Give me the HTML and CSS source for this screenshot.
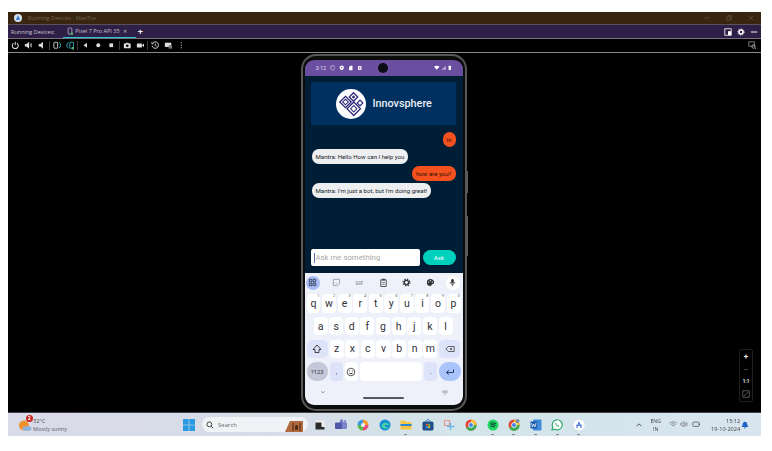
FILE: index.html
```html
<!DOCTYPE html>
<html lang="en">
<head>
<meta charset="utf-8">
<title>Running Devices - ManTra</title>
<link rel="stylesheet" href="styles.css">
</head>
<body>
<div class="app-window">
  <header class="titlebar">
    <svg class="app-logo" viewBox="0 0 10 10"><circle cx="5" cy="5" r="5" fill="#d8e4f4"/><path d="M5 1.6 8 7.6H2Z" fill="#3f7fd8"/></svg>
    <span class="title-text">Running Devices - ManTra</span>
    <div class="win-buttons">
      <svg viewBox="0 0 10 10"><path d="M2 5H8" stroke="#5b5040"/></svg>
      <svg viewBox="0 0 10 10"><path d="M2 3.5H6.500V8H2ZM3.500 3.500V2H8V6.500H6.500" fill="none" stroke="#5b5040"/></svg>
      <svg viewBox="0 0 10 10"><path d="M2 2 8 8M8 2 2 8" stroke="#5b5040"/></svg>
    </div>
  </header>
  <div class="tabbar">
    <span class="tab-label">Running Devices:</span>
    <div class="tab">
      <svg viewBox="0 0 8 10"><rect x="1.500" y="1" width="5" height="8" rx="1" fill="none" stroke="#b9c2cc"/><rect x="5" y="7" width="3" height="3" fill="#4caf6c"/></svg>
      <span>Pixel 7 Pro API 35</span>
      <span class="tab-x">✕</span>
    </div>
    <span class="tab-plus">+</span>
    <div class="tab-tools">
      <svg viewBox="0 0 10 10"><rect x="1" y="1" width="8" height="8" fill="none" stroke="#fff"/><rect x="5" y="4" width="4" height="5" fill="#fff"/></svg>
      <svg viewBox="0 0 10 10"><circle cx="5" cy="5" r="2.500" fill="none" stroke="#fff" stroke-width="2"/><circle cx="5" cy="5" r="4" fill="none" stroke="#fff" stroke-width="1" stroke-dasharray="1.500 1.500"/></svg>
      <svg viewBox="0 0 10 10"><path d="M1 5H9" stroke="#fff" stroke-width="1.200"/></svg>
    </div>
  </div>
  <div class="toolbar">
    <svg viewBox="0 0 10 10"><path d="M5 1V5M3 2.500A3.500 3.500 0 1 0 7 2.500" fill="none" stroke="#ddd" stroke-width="1.200"/></svg>
    <svg viewBox="0 0 10 10"><path d="M1 3.500H3L6 1V9L3 6.500H1Z" fill="#ddd"/><path d="M7.500 3V7M8.800 2.500V7.500" stroke="#ddd" stroke-width=".7"/></svg>
    <svg viewBox="0 0 10 10"><path d="M2 3.500H4L7 1V9L4 6.500H2Z" fill="#ddd"/></svg>
    <i class="tool-sep"></i>
    <svg viewBox="0 0 10 10"><rect x="1" y="1.500" width="4.500" height="7" rx=".8" fill="none" stroke="#ddd"/><path d="M7 1.500A4 4 0 0 1 7 8.500" fill="none" stroke="#35c6d8"/></svg>
    <svg viewBox="0 0 10 10"><rect x="4.500" y="1.500" width="4.500" height="7" rx=".8" fill="none" stroke="#35c6d8"/><path d="M3 1.500A4 4 0 0 0 3 8.500" fill="none" stroke="#35c6d8"/><rect x="7" y="7" width="3" height="3" fill="#4caf6c"/></svg>
    <i class="tool-sep"></i>
    <svg viewBox="0 0 10 10"><path d="M7 2V8L3 5Z" fill="#ddd"/></svg>
    <svg viewBox="0 0 10 10"><circle cx="5" cy="5" r="2.300" fill="#ddd"/></svg>
    <svg viewBox="0 0 10 10"><rect x="2.800" y="2.800" width="4.400" height="4.400" fill="#ddd"/></svg>
    <i class="tool-sep"></i>
    <svg viewBox="0 0 10 10"><path d="M1 3H3L3.800 2H6.200L7 3H9V8.500H1Z" fill="#ddd"/><circle cx="5" cy="5.500" r="1.500" fill="#000"/></svg>
    <svg viewBox="0 0 10 10"><rect x="1" y="2.800" width="6" height="4.800" rx=".6" fill="#ddd"/><path d="M7 5 9.500 3V7.500Z" fill="#ddd"/></svg>
    <i class="tool-sep"></i>
    <svg viewBox="0 0 10 10"><path d="M2 2.500A3.800 3.800 0 1 1 1.300 5.500" fill="none" stroke="#ddd" stroke-width="1.100"/><path d="M5 3V5.300L6.600 6.200M1 1V3.300H3.300" fill="none" stroke="#ddd" stroke-width=".9"/></svg>
    <svg viewBox="0 0 10 10"><rect x="1" y="2" width="7.500" height="5" fill="#ddd"/><rect x="5.500" y="5" width="4" height="4" fill="#777"/></svg>
    <svg viewBox="0 0 10 10"><path d="M5 1.500V2.700M5 4.400V5.600M5 7.300V8.500" stroke="#ddd" stroke-width="1.200"/></svg>
    <svg class="toolbar-end" viewBox="0 0 10 10"><rect x="1" y="1" width="6.500" height="5" fill="none" stroke="#888"/><circle cx="6.500" cy="6.500" r="2" fill="none" stroke="#aaa"/><path d="M8 8 9.500 9.500" stroke="#aaa"/></svg>
  </div>
  <main class="viewport">
    <div class="phone">
      <i class="side-btn side-power"></i>
      <i class="side-btn side-volume"></i>
      <div class="screen">
        <i class="camera"></i>
        <div class="statusbar">
          <span class="clock">3:12</span>
          <svg viewBox="0 0 8 8"><path d="M4 .8 7 2V4.500C7 6 5.500 7 4 7.500 2.500 7 1 6 1 4.500V2Z" fill="none" stroke="#d8cdea"/></svg>
          <svg viewBox="0 0 8 8"><path d="M4 .8 7 2V4.500C7 6 5.500 7 4 7.500 2.500 7 1 6 1 4.500V2Z" fill="#fff"/><circle cx="4" cy="4" r="1" fill="#6a4ea0"/></svg>
          <svg viewBox="0 0 8 8"><path d="M1.500 3 3.500 1H6.500V7.500H1.500Z" fill="#fff"/></svg>
          <svg viewBox="0 0 8 8"><rect x="1.500" y="1.500" width="5" height="5.500" fill="#fff"/><rect x="3" y="3" width="2" height="2" fill="#6a4ea0"/></svg>
          <div class="status-right">
            <svg viewBox="0 0 8 8"><path d="M0 2.500C2 .5 6 .5 8 2.500L4 7Z" fill="#fff"/></svg>
            <svg viewBox="0 0 8 8"><path d="M7 1V7H1Z" fill="#bfb2d8"/></svg>
            <svg viewBox="0 0 8 8"><rect x="2.300" y="1.200" width="3.400" height="6" rx=".5" fill="#fff"/></svg>
          </div>
        </div>
        <section class="chat-app">
          <div class="banner">
            <div class="logo-disc">
              <svg viewBox="0 0 30 30">
                <g fill="none" stroke="#2f2a78">
                  <rect x="14.500" y="5" width="6" height="6" transform="rotate(45 17.500 8)" stroke-width="1.300"/>
                  <rect x="16.300" y="6.800" width="2.400" height="2.400" transform="rotate(45 17.500 8)" fill="#2f2a78" stroke="none"/>
                  <rect x="5.500" y="9" width="8" height="8" transform="rotate(45 9.500 13)" stroke-width="1.300"/>
                  <rect x="7.500" y="11" width="4" height="4" transform="rotate(45 9.500 13)" stroke-width="1"/>
                  <rect x="13" y="15" width="9.500" height="9.500" transform="rotate(45 17.750 19.750)" stroke-width="1.300"/>
                  <rect x="15.500" y="17.500" width="4.500" height="4.500" transform="rotate(45 17.750 19.750)" stroke-width="1"/>
                  <rect x="22" y="12" width="4" height="4" transform="rotate(45 24 14)" stroke-width="1.200"/>
                </g>
              </svg>
            </div>
            <span class="brand">Innovsphere</span>
          </div>
          <div class="messages">
            <div class="bubble bubble-user">hi</div>
            <div class="bubble bubble-bot">Mantra: Hello How can I help you</div>
            <div class="bubble bubble-user">how are you?</div>
            <div class="bubble bubble-bot">Mantra: I'm just a bot, but I'm doing great!</div>
          </div>
          <div class="composer">
            <div class="field"><i class="caret"></i><span>Ask me something</span></div>
            <button class="ask" type="button">Ask</button>
          </div>
        </section>
        <section class="keyboard">
          <div class="kb-tools">
            <span class="kb-tool kb-tool-on"><svg viewBox="0 0 10 10"><path d="M1.500 1.500H4.300V4.300H1.500ZM5.700 1.500H8.500V4.300H5.700ZM1.500 5.700H4.300V8.500H1.500ZM5.700 5.700H8.500V8.500H5.700Z" fill="none" stroke="#33415f"/></svg></span>
            <span class="kb-tool"><svg viewBox="0 0 10 10"><path d="M1.500 1.500H8.500V6L6 8.500H1.500Z" fill="none" stroke="#9a9ca8"/><path d="M3.500 5.500C4.500 6.300 5.500 6.300 6.500 5.500" fill="none" stroke="#9a9ca8" stroke-width=".7"/></svg></span>
            <span class="kb-tool kb-gif">GIF</span>
            <span class="kb-tool"><svg viewBox="0 0 10 10"><path d="M2 2H8V9.500H2Z" fill="none" stroke="#444"/><rect x="3.500" y=".8" width="3" height="2" fill="#444"/><path d="M3.500 5H6.500M3.500 7H6.500" stroke="#444" stroke-width=".7"/></svg></span>
            <span class="kb-tool"><svg viewBox="0 0 10 10"><circle cx="5" cy="5" r="2.400" fill="none" stroke="#333" stroke-width="1.500"/><circle cx="5" cy="5" r="3.800" fill="none" stroke="#333" stroke-width="1.300" stroke-dasharray="1.500 1.500"/></svg></span>
            <span class="kb-tool"><svg viewBox="0 0 10 10"><path d="M5 1A4 4 0 0 0 5 9C6.500 9 6 7.500 6.500 7 7 6.500 9 7 9 5 9 2.500 7 1 5 1Z" fill="#333"/><circle cx="3" cy="4.500" r=".7" fill="#eef0fa"/><circle cx="5" cy="3" r=".7" fill="#eef0fa"/><circle cx="7" cy="4.500" r=".7" fill="#eef0fa"/></svg></span>
            <span class="kb-tool kb-mic"><svg viewBox="0 0 10 10"><rect x="3.600" y="1" width="2.800" height="5" rx="1.400" fill="#333"/><path d="M2.500 4.500C2.500 8 7.500 8 7.500 4.500M5 7V9.300" fill="none" stroke="#333" stroke-width=".8"/></svg></span>
          </div>
          <div class="kb-rows">
            <div class="kb-row">
              <span class="key">q<sup>1</sup></span><span class="key">w<sup>2</sup></span><span class="key">e<sup>3</sup></span><span class="key">r<sup>4</sup></span><span class="key">t<sup>5</sup></span><span class="key">y<sup>6</sup></span><span class="key">u<sup>7</sup></span><span class="key">i<sup>8</sup></span><span class="key">o<sup>9</sup></span><span class="key">p<sup>0</sup></span>
            </div>
            <div class="kb-row kb-row-inset">
              <span class="key">a</span><span class="key">s</span><span class="key">d</span><span class="key">f</span><span class="key">g</span><span class="key">h</span><span class="key">j</span><span class="key">k</span><span class="key">l</span>
            </div>
            <div class="kb-row">
              <span class="key key-fn key-wide"><svg viewBox="0 0 10 10"><path d="M5 1 9 5.500H7V8.500H3V5.500H1Z" fill="none" stroke="#333" stroke-width=".9"/></svg></span>
              <span class="key">z</span><span class="key">x</span><span class="key">c</span><span class="key">v</span><span class="key">b</span><span class="key">n</span><span class="key">m</span>
              <span class="key key-fn key-wide"><svg viewBox="0 0 12 10"><path d="M4 2H11V8H4L1 5Z" fill="none" stroke="#333" stroke-width=".9"/><path d="M6 3.800 8.500 6.200M8.500 3.800 6 6.200" stroke="#333" stroke-width=".8"/></svg></span>
            </div>
            <div class="kb-row">
              <span class="key key-wide key-num">?123</span>
              <span class="key key-fn key-punct">,</span>
              <span class="key key-punct"><svg viewBox="0 0 10 10"><circle cx="5" cy="5" r="3.800" fill="none" stroke="#333" stroke-width=".8"/><circle cx="3.600" cy="4" r=".6" fill="#333"/><circle cx="6.400" cy="4" r=".6" fill="#333"/><path d="M3 6C4 7.500 6 7.500 7 6Z" fill="#333"/></svg></span>
              <span class="key key-space"></span>
              <span class="key key-fn key-punct">.</span>
              <span class="key key-wide key-enter"><svg viewBox="0 0 10 10"><path d="M8.500 2.500V5.500H1.500M3.800 3.300 1.500 5.500 3.800 7.700" fill="none" stroke="#2b3a63"/></svg></span>
            </div>
          </div>
          <div class="kb-nav">
            <svg viewBox="0 0 10 6"><path d="M3 1.500 5 3.500 7 1.500" fill="none" stroke="#777"/></svg>
            <svg viewBox="0 0 10 6"><rect x="1.500" y=".5" width="7" height="3" fill="#bbb"/><rect x="3.500" y="4.300" width="3" height="1" fill="#999"/></svg>
          </div>
          <i class="home-bar"></i>
        </section>
      </div>
    </div>
    <div class="zoom-panel">
      <span>+</span>
      <span class="zoom-dim">−</span>
      <span class="zoom-one">1:1</span>
      <svg viewBox="0 0 10 10"><rect x="1" y="1" width="8" height="8" fill="none" stroke="#666"/><path d="M2.500 7.500 7.500 2.500" stroke="#666"/></svg>
    </div>
  </main>
  <footer class="taskbar">
    <div class="weather">
      <div class="weather-icon">
        <svg viewBox="0 0 14 14"><circle cx="6" cy="7.500" r="5" fill="#f2922e"/><ellipse cx="9" cy="10.500" rx="4.500" ry="2.500" fill="#8fb4dc"/></svg>
        <b class="badge">2</b>
      </div>
      <div class="weather-text"><span class="temp">32°C</span><span>Mostly sunny</span></div>
    </div>
    <svg class="win-logo" viewBox="0 0 12 12"><path d="M0 0H5.700V5.700H0ZM6.300 0H12V5.700H6.300ZM0 6.300H5.700V12H0ZM6.300 6.300H12V12H6.300Z" fill="#2a9be0"/></svg>
    <div class="search">
      <svg viewBox="0 0 10 10"><circle cx="4.200" cy="4.200" r="3" fill="none" stroke="#333" stroke-width="1.100"/><path d="M6.500 6.500 9 9" stroke="#333" stroke-width="1.200"/></svg>
      <span>Search</span>
      <div class="search-art"><svg viewBox="0 0 22 12"><path d="M0 12 5 1H18V12Z" fill="#b06a3e"/><rect x="7" y="3" width="2" height="8" fill="#7a4526"/><rect x="14" y="3" width="2" height="8" fill="#7a4526"/><rect x="10" y="5" width="3" height="5" rx="1.500" fill="#4a2a18"/></svg></div>
    </div>
    <div class="pins">
      <span class="pin"><svg viewBox="0 0 12 12"><rect x="1.500" y="1.500" width="9" height="9" fill="#eee"/><path d="M1.500 3.500H7.500V8H10.500V10.500H1.500Z" fill="#2a2a2a"/></svg></span>
      <span class="pin"><svg viewBox="0 0 12 12"><rect x="4" y="3" width="8" height="7" rx="1.500" fill="#7b83c9"/><rect x="0" y="3.500" width="7" height="6.500" rx="1" fill="#4f57a8"/><circle cx="6.500" cy="1.700" r="1.500" fill="#6b73bf"/><circle cx="10" cy="2" r="1.200" fill="#8d95d6"/></svg></span>
      <span class="pin"><svg viewBox="0 0 12 12"><path d="M6 .5A5.500 5.500 0 0 1 11.500 6L6 6Z" fill="#f0a030"/><path d="M11.500 6A5.500 5.500 0 0 1 6 11.500L6 6Z" fill="#e2507a"/><path d="M6 11.500A5.500 5.500 0 0 1 .5 6L6 6Z" fill="#58b84c"/><path d="M.5 6A5.500 5.500 0 0 1 6 .5L6 6Z" fill="#3f95e0"/><circle cx="6" cy="6" r="2" fill="#f2f2fb"/></svg></span>
      <span class="pin"><svg viewBox="0 0 12 12"><circle cx="6" cy="6" r="5.500" fill="#1590d0"/><path d="M2.500 7C3 3 9 2.500 10 6H5.500C5.500 8 8 9 10 8 8.500 10.500 4 10.500 2.500 7Z" fill="#49d2a2"/></svg></span>
      <span class="pin pin-open"><svg viewBox="0 0 12 12"><path d="M.5 1.500H5L6 3H11.500V10.500H.5Z" fill="#f5c542"/><rect x=".5" y="5" width="11" height="2" fill="#2c86d8"/></svg></span>
      <span class="pin"><svg viewBox="0 0 12 12"><rect x=".5" y="2.500" width="11" height="9" rx="1.500" fill="#1c4f8c"/><path d="M4 2.500C4 0 8 0 8 2.500" fill="none" stroke="#2e79c6"/><rect x="3.800" y="4.800" width="2" height="2" fill="#ef5a2a"/><rect x="6.200" y="4.800" width="2" height="2" fill="#7dbb3a"/><rect x="3.800" y="7.200" width="2" height="2" fill="#2ea5e8"/><rect x="6.200" y="7.200" width="2" height="2" fill="#f5b821"/></svg></span>
      <span class="pin"><svg viewBox="0 0 12 12"><path d="M1.500 1.500H6.500V6.500H1.500Z" fill="none" stroke="#e79a8c" stroke-width="1.200"/><path d="M7.500 3.500V11M4 7.500H11.500" stroke="#6ab8e8" stroke-width="1.300"/></svg></span>
      <span class="pin"><svg viewBox="0 0 12 12"><circle cx="6" cy="6" r="5.500" fill="#e44336"/><path d="M6 .5A5.500 5.500 0 0 1 11.500 6H6Z" fill="#f7c42c"/><path d="M1.200 9 6 6 11.500 6A5.500 5.500 0 0 1 1.200 9Z" fill="#3cab55"/><circle cx="6" cy="6" r="2.700" fill="#fff"/><circle cx="6" cy="6" r="2" fill="#3f82e8"/></svg></span>
      <span class="pin pin-open"><svg viewBox="0 0 12 12"><circle cx="6" cy="6" r="5.500" fill="#1ed760"/><path d="M3 4.300C5 3.600 7.500 3.800 9 4.800M3.300 6C5 5.500 7 5.700 8.500 6.500M3.600 7.600C5 7.200 6.500 7.400 7.800 8" fill="none" stroke="#123" stroke-width=".9"/></svg></span>
      <span class="pin pin-open"><svg viewBox="0 0 12 12"><circle cx="6" cy="6" r="5.500" fill="#e44336"/><path d="M6 .5A5.500 5.500 0 0 1 11.500 6H6Z" fill="#f7c42c"/><path d="M1.200 9 6 6 11.500 6A5.500 5.500 0 0 1 1.200 9Z" fill="#3cab55"/><circle cx="6" cy="6" r="2.700" fill="#fff"/><circle cx="6" cy="6" r="2" fill="#3f82e8"/><circle cx="9.500" cy="2" r="2" fill="#7a8aa8"/></svg></span>
      <span class="pin pin-open"><svg viewBox="0 0 12 12"><rect x="3" y=".5" width="8.500" height="11" rx="1" fill="#3f8bd8"/><rect x=".5" y="2.500" width="6.500" height="7" fill="#1b5bb0"/><path d="M1.500 4 2.500 8 3.700 5 5 8 6 4" fill="none" stroke="#fff" stroke-width=".7"/></svg></span>
      <span class="pin pin-open"><svg viewBox="0 0 12 12"><path d="M1 11 1.800 8A5 5 0 1 1 4 10.200Z" fill="#fff" stroke="#2eaa6a" stroke-width="1.200"/><path d="M4.200 3.800C4 6 6 8 8.200 7.800L7.700 6.500 6.700 6.800 5.300 5.300 5.500 4.300Z" fill="#2eaa6a"/></svg></span>
      <span class="pin pin-open"><svg viewBox="0 0 12 12"><circle cx="6" cy="6" r="5.500" fill="#fff"/><path d="M6 2 9 9H7.800L6 5 4.200 9H3Z" fill="#4a78d8"/><rect x="3" y="5.800" width="6" height="1" fill="#4a78d8"/></svg></span>
    </div>
    <div class="tray">
      <svg class="tray-chevron" viewBox="0 0 10 10"><path d="M2 6.500 5 3.500 8 6.500" fill="none" stroke="#333"/></svg>
      <div class="lang"><span>ENG</span><span>IN</span></div>
      <svg class="tray-icon" viewBox="0 0 10 10"><path d="M.5 4C3 1.500 7 1.500 9.500 4M2 5.500C3.700 4 6.300 4 8 5.500M3.500 7C4.300 6.300 5.700 6.300 6.500 7" fill="none" stroke="#555" stroke-width=".7"/></svg>
      <svg class="tray-icon" viewBox="0 0 10 10"><path d="M1 3.800H2.500L4.800 2V8L2.500 6.200H1Z" fill="none" stroke="#555" stroke-width=".7"/><path d="M6 3.500C6.800 4.300 6.800 5.700 6 6.500M7.300 2.500C8.700 4 8.700 6 7.300 7.500" fill="none" stroke="#555" stroke-width=".7"/></svg>
      <svg class="tray-icon" viewBox="0 0 10 10"><rect x="1" y="2.500" width="7.300" height="5" rx="1" fill="none" stroke="#444" stroke-width=".8"/><rect x="8.600" y="4" width=".9" height="2" fill="#444"/></svg>
      <div class="clockbox"><span>15:12</span><span>19-10-2024</span></div>
      <svg class="bell" viewBox="0 0 10 10"><path d="M5 .8C7 .8 7.800 2.500 7.800 4.500L9 7.500H1L2.200 4.500C2.200 2.500 3 .8 5 .8Z" fill="#1a62c4"/><rect x="4" y="8" width="2" height="1.300" fill="#1a62c4"/></svg>
    </div>
  </footer>
</div>
</body>
</html>
```
FILE: styles.css
```css
* { box-sizing: border-box; }
html, body { margin: 0; padding: 0; background: #fff; }
body { height: 451px; overflow: hidden; padding: 12px 11px 0 8px; font-family: Roboto, "Liberation Sans", sans-serif; }
.app-window { display: flex; flex-direction: column; height: 424px; filter: blur(.5px); }
svg { display: block; flex: none; }
i { display: block; }

.titlebar { height: 13px; flex: none; display: flex; align-items: center; background: #3a2610; border-bottom: 1px solid #5a5058; padding-left: 6px; }
.app-logo { width: 8px; height: 8px; }
.title-text { margin-left: 6px; font: 5.600px "Open Sans", sans-serif; color: #6d6251; }
.win-buttons { margin-left: auto; display: flex; gap: 14px; padding-right: 6px; }
.win-buttons svg { width: 8px; height: 8px; }

.tabbar { height: 14px; flex: none; display: flex; align-items: center; background: #2d1f45; border-bottom: 1px solid #77727c; padding-left: 3px; color: #c9c6d2; font: 5.500px "Open Sans", sans-serif; }
.tab { margin-left: 8px; height: 13px; display: flex; align-items: center; gap: 2.500px; padding: 0 4px; border-bottom: 1.500px solid #27c4d6; width: 73px; color: #c5c3d0; }
.tab svg { width: 6px; height: 8px; }
.tab-x { margin-left: 1px; font-size: 5px; }
.tab-plus { margin-left: 2px; color: #fff; font-size: 9px; font-weight: 700; line-height: 1; }
.tab-tools { margin-left: auto; display: flex; gap: 5px; padding-right: 3px; }
.tab-tools svg { width: 8px; height: 8px; }

.toolbar { height: 14px; flex: none; display: flex; align-items: center; gap: 4.500px; background: #000; border-bottom: 1px solid #8a8a8a; padding-left: 3px; }
.toolbar svg { width: 8.500px; height: 8.500px; }
.tool-sep { width: 1px; height: 9px; background: #3d3d3d; margin: 0 -1.500px; }
.toolbar .toolbar-end { margin-left: auto; margin-right: 5px; }

.viewport { flex: 1; min-height: 0; position: relative; display: flex; justify-content: center; padding-top: 1px; background: #000; }
.phone { position: relative; width: 166px; height: 357px; margin-right: 2px; padding: 4px 2px; background: #0c0c0c; border: 2px solid #585858; border-radius: 15px; }
.side-btn { position: absolute; right: -3px; width: 2px; background: #5b5b5b; }
.side-power { top: 115px; height: 22px; }
.side-volume { top: 160px; height: 40px; }
.screen { position: relative; height: 345px; border-radius: 9px; overflow: hidden; display: flex; flex-direction: column; }
.camera { position: absolute; top: 3px; left: 73px; width: 10px; height: 10px; border-radius: 50%; background: #0c0c14; z-index: 1; }

.statusbar { height: 16px; flex: none; display: flex; align-items: center; gap: 3.500px; padding: 0 10px 0 11px; background: #6a4ea0; color: #e4dcf0; font-size: 5.500px; }
.statusbar svg { width: 5.500px; height: 5.500px; }
.status-right { margin-left: auto; display: flex; gap: 1px; }

.chat-app { height: 197px; flex: none; display: flex; flex-direction: column; background: #001d36; padding: 6px 7px 7px 6px; }
.banner { height: 43px; flex: none; display: flex; align-items: center; gap: 7px; padding-left: 25px; background: #003060; }
.logo-disc { width: 30px; height: 30px; border-radius: 50%; background: #fff; }
.logo-disc svg { width: 30px; height: 30px; }
.brand { color: #e9eef4; font-size: 10.800px; font-weight: 500; }
.messages { display: flex; flex-direction: column; align-items: flex-start; gap: 2px; margin-top: 7px; }
.bubble { height: 15px; display: flex; align-items: center; padding: 0 4px; border-radius: 7px; font-size: 6.100px; white-space: nowrap; }
.bubble-user { align-self: flex-end; background: #f4511e; color: #2a0f08; }
.bubble-bot { margin-left: 1px; background: #eceef0; color: #202428; }
.composer { margin-top: auto; display: flex; align-items: center; gap: 3px; }
.field { width: 109px; height: 17px; display: flex; align-items: center; gap: 1px; padding-left: 3px; background: #fff; border-radius: 2px; color: #a8a8a8; font-size: 7.800px; }
.caret { width: 1px; height: 10px; background: #5d6fb0; }
.ask { width: 33px; height: 15px; padding: 0; border: 0; border-radius: 8px; background: #00d1bd; color: #e9fbf8; font: 500 5.800px Roboto, sans-serif; }

.keyboard { position: relative; flex: 1; background: #eef0fa; }
.kb-tools { height: 21px; display: flex; justify-content: space-between; align-items: center; padding: 0 2px 2px 0; }
.kb-tool { width: 16px; height: 14px; display: flex; align-items: center; justify-content: center; }
.kb-tool svg { width: 9px; height: 9px; }
.kb-tool-on { width: 14px; height: 14px; margin-left: 1px; margin-right: 1px; border-radius: 50%; background: #a9bdf5; }
.kb-gif { font-size: 5.200px; font-weight: 700; color: #9a9ca8; }
.kb-mic { width: 14px; margin-right: 1px; border-radius: 50%; background: #fff; }
.kb-rows { display: flex; flex-direction: column; gap: 4.300px; padding: 0 2px; }
.kb-row { display: flex; gap: 1.600px; height: 18.500px; }
.kb-row-inset { padding: 0 8px 0 7px; }
.key { position: relative; flex: 1 1 0; min-width: 0; display: flex; align-items: center; justify-content: center; background: #fff; border-radius: 4px; color: #30323a; font-size: 10.500px; }
.key sup { position: absolute; top: 0; right: 1px; font-size: 3.800px; line-height: 1.200; color: #666; }
.key svg { width: 10px; height: 10px; }
.key-fn { background: #dde3f8; }
.key-wide { flex: none; width: 21.500px; border-radius: 5px; }
.key-num { background: #c2c8d8; border-radius: 9px; font-size: 5.800px; }
.key-punct { flex: none; width: 13.500px; font-size: 7px; }
.key-space { flex: 1 1 auto; }
.key-enter { background: #a9c4fa; border-radius: 9px; }
.kb-nav { display: flex; justify-content: space-between; padding: 9px 14px 0 14px; }
.kb-nav svg { width: 8px; height: 5px; }
.home-bar { position: absolute; left: 58px; bottom: 6px; width: 41px; height: 2px; border-radius: 1px; background: #555862; }

.zoom-panel { position: absolute; top: 296px; right: 8px; width: 14px; height: 53px; display: flex; flex-direction: column; align-items: center; justify-content: space-around; background: #000; border: 1px solid #1f1f1f; border-radius: 2px; color: #eee; font-size: 8px; font-weight: 700; line-height: 1; }
.zoom-panel svg { width: 8px; height: 8px; }
.zoom-dim { color: #555; }
.zoom-one { font-size: 4.600px; }

.taskbar { height: 24px; flex: none; display: flex; align-items: center; padding-left: 10px; background: linear-gradient(90deg, #d9dbe8 0%, #d8dce8 30%, #d3e4ea 60%, #d8e5ef 100%); border-top: 1px solid #444; color: #333; font-family: "Open Sans", sans-serif; }
.weather { width: 165px; display: flex; align-items: center; gap: 1px; }
.weather-icon { position: relative; width: 14px; height: 14px; }
.weather-icon svg { width: 14px; height: 14px; }
.badge { position: absolute; top: -3px; right: -1px; width: 7.500px; height: 7.500px; border-radius: 50%; background: #c8261e; color: #fff; font-size: 5px; line-height: 7.500px; text-align: center; }
.weather-text { display: flex; flex-direction: column; font-size: 5.500px; line-height: 8px; color: #5a6070; }
.temp { color: #404450; }
.win-logo { width: 12px; height: 12px; }
.search { margin-left: 7px; width: 106px; height: 15px; display: flex; align-items: center; gap: 4px; padding-left: 4px; background: #f0f3f5; border-radius: 8px; font-size: 6px; color: #666; }
.search svg { width: 8px; height: 8px; }
.search-art { margin-left: auto; width: 23px; height: 15px; display: flex; align-items: flex-end; }
.search .search-art svg { width: 22px; height: 12px; }
.pins { margin-left: 1px; display: flex; }
.pin { position: relative; width: 21.600px; display: flex; justify-content: center; }
.pin svg { width: 12px; height: 12px; }
.pin-open::after { content: ""; position: absolute; left: 9px; bottom: -4px; width: 3px; height: 1px; background: #888; }
.tray { flex: 1; min-width: 0; display: flex; align-items: center; padding-left: 45px; }
.tray-chevron { width: 8px; height: 8px; }
.lang { margin-left: 5px; width: 16px; display: flex; flex-direction: column; align-items: center; font-size: 5.200px; line-height: 8px; color: #444; }
.tray-icon { width: 8.500px; height: 8.500px; margin-left: 3px; }
.lang + .tray-icon { margin-left: 5px; }
.clockbox { margin-left: 7px; width: 33px; display: flex; flex-direction: column; align-items: flex-end; font-size: 5.600px; line-height: 8px; color: #444; }
.bell { width: 8px; height: 8px; margin-left: 1px; }
```
